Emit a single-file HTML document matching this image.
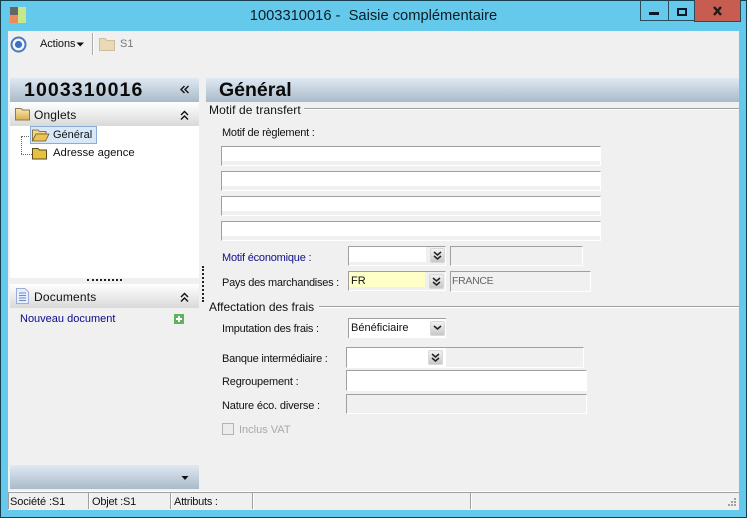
<!DOCTYPE html>
<html><head><meta charset="utf-8"><style>
html,body{margin:0;padding:0;background:#f0f0f0}
#w{position:relative;width:747px;height:518px;overflow:hidden;background:#65c9ec;font:11px "Liberation Sans",sans-serif;color:#111}
#w div,#w span.a{position:absolute;white-space:nowrap}
.t{line-height:14px;height:14px}
.f{box-sizing:border-box;border-top:1px solid #a0a0a0;border-left:1px solid #a0a0a0;border-right:1px solid #fff;border-bottom:1px solid #fff;background:#f0f0f0}
.btn{width:15px;height:15px;box-sizing:border-box;background:linear-gradient(#f2f2f2,#c8c8c8);border:1px solid #d8d8d8;border-radius:2px}
.hd{background:linear-gradient(#dfe9f2,#a9bac9)}
.sec{background:linear-gradient(#ffffff,#d9d9d9)}
.line{height:1px;background:#a0a0a0;border-bottom:1px solid #fff}
</style></head><body><div id="w">
<div style="left:0;top:0;width:747px;height:1px;background:#17404f"></div>
<div style="left:0;top:517px;width:747px;height:1px;background:#17404f"></div>
<div style="left:0;top:0;width:1px;height:518px;background:#17404f"></div>
<div style="left:746px;top:0;width:1px;height:518px;background:#17404f"></div>
<!-- app icon -->
<div style="left:10px;top:7px;width:8px;height:8px;background:#666"></div>
<div style="left:10px;top:15px;width:8px;height:8px;background:#f08a5a"></div>
<div style="left:18px;top:7px;width:8px;height:16px;background:#c4e88a"></div>
<div class="t" style="left:0;top:8px;width:747px;text-align:center;font-size:14.7px;line-height:16px;height:16px;color:#0c1c24">1003310016 -&nbsp; Saisie complémentaire</div>
<!-- window buttons -->
<div style="left:640px;top:0;width:29px;height:21px;box-sizing:border-box;border:1px solid #2a4c5c;border-top:0;border-right:0"></div>
<div style="left:668px;top:0;width:27px;height:21px;box-sizing:border-box;border:1px solid #2a4c5c;border-top:0;border-right:0"></div>
<div style="left:694px;top:0;width:47px;height:22px;box-sizing:border-box;background:#c75c50;border:1px solid #2a4c5c;border-top:0"></div>
<div style="left:649px;top:12px;width:10px;height:3px;background:#08182a"></div>
<div style="left:677px;top:8px;width:10px;height:8px;box-sizing:border-box;border:2px solid #08182a;border-top-width:2px"></div>
<svg style="position:absolute;left:712px;top:6px" width="12" height="10"><path d="M2 1L9 9M9 1L2 9" stroke="#1c1c1c" stroke-width="2.4" fill="none"/></svg>
<!-- client -->
<div style="left:8px;top:31px;width:731px;height:479px;background:#f0f0f0"></div>
<!-- toolbar -->
<svg style="position:absolute;left:10px;top:36px" width="18" height="18"><circle cx="8.5" cy="8.5" r="7" fill="#f4f6fc" stroke="#4a78c4" stroke-width="2"/><circle cx="8.5" cy="8.5" r="3.6" fill="#3f70c0"/></svg>
<div class="t" style="left:40px;top:37px;font-size:11px;letter-spacing:-.1px">Actions</div>
<svg style="position:absolute;left:76px;top:41px" width="9" height="6"><path d="M0.5 1.5H8L4.2 5.5Z" fill="#111"/></svg>
<div style="left:92px;top:33px;width:1px;height:22px;background:#aaa;border-right:1px solid #fff"></div>
<svg style="position:absolute;left:99px;top:36px" width="17" height="16"><path d="M0.5 2.5H6L8 4.5H15.5V14.5H0.5Z" fill="#ead9b4" stroke="#cdbd9c"/></svg>
<div class="t" style="left:120px;top:37px;color:#777;font-size:11px">S1</div>
<!-- left panel -->
<div class="hd" style="left:10px;top:78px;width:189px;height:24px"></div>
<div style="left:24px;top:79px;height:22px;line-height:23px;font-size:19.5px;font-weight:bold;color:#0a0a0a;letter-spacing:1.1px">1003310016</div>
<svg style="position:absolute;left:180px;top:85px" width="10" height="10"><path d="M4.5 1L1 4.5L4.5 8M8.5 1L5 4.5L8.5 8" stroke="#111" stroke-width="1.4" fill="none"/></svg>
<div class="sec" style="left:10px;top:102px;width:189px;height:24px"></div>
<svg style="position:absolute;left:15px;top:107px" width="16" height="14"><defs><linearGradient id="g1" x1="0" y1="0" x2="0" y2="1"><stop offset="0" stop-color="#f6e8b8"/><stop offset="1" stop-color="#d9ae4a"/></linearGradient></defs><path d="M0.5 1.5H6L7.5 3H14.5V13H0.5Z" fill="url(#g1)" stroke="#8a7a50"/></svg>
<div class="t" style="left:34px;top:108px;font-size:12px;letter-spacing:.15px">Onglets</div>
<svg style="position:absolute;left:180px;top:110px" width="10" height="11"><path d="M1 5L4.5 1.5L8 5M1 9.5L4.5 6L8 9.5" stroke="#111" stroke-width="1.4" fill="none"/></svg>
<div style="left:10px;top:126px;width:189px;height:152px;background:#fff"></div>
<div style="left:21px;top:136px;width:10px;height:0;border-top:1px dotted #666"></div>
<div style="left:21px;top:136px;width:0;height:18px;border-left:1px dotted #666"></div>
<div style="left:21px;top:154px;width:11px;height:0;border-top:1px dotted #666"></div>
<div style="left:30px;top:126px;width:67px;height:18px;box-sizing:border-box;background:#d7e8f8;border:1px solid #88aed4"></div>
<svg style="position:absolute;left:32px;top:128px" width="18" height="14"><path d="M0.5 2H6L7.5 3.5H14V6H4L0.5 13Z" fill="#f2d98a" stroke="#6b5a30" stroke-width=".8"/><path d="M4 6H17L13.5 13H0.5Z" fill="#eec254" stroke="#6b5a30" stroke-width=".8"/></svg>
<div class="t" style="left:53px;top:128px;font-size:11px">Général</div>
<svg style="position:absolute;left:32px;top:147px" width="16" height="13"><path d="M0.5 1.5H6L7.5 3H14.5V12H0.5Z" fill="#e8c040" stroke="#5a4a20"/></svg>
<div class="t" style="left:53px;top:146px;font-size:11.3px">Adresse agence</div>
<div style="left:87px;top:279px;width:35px;height:0;border-top:2px dotted #222"></div>
<div class="sec" style="left:10px;top:284px;width:189px;height:24px"></div>
<svg style="position:absolute;left:16px;top:288px" width="13" height="16"><path d="M0.5 0.5H9L12.5 4V15.5H0.5Z" fill="#e8eefa" stroke="#9fb0d8"/><path d="M3 5H10M3 7.5H10M3 10H10M3 12.5H10" stroke="#6c8ad0"/></svg>
<div class="t" style="left:34px;top:290px;font-size:12px;letter-spacing:.2px">Documents</div>
<svg style="position:absolute;left:180px;top:292px" width="10" height="11"><path d="M1 5L4.5 1.5L8 5M1 9.5L4.5 6L8 9.5" stroke="#111" stroke-width="1.4" fill="none"/></svg>
<div class="t" style="left:20px;top:312px;color:#0a0a8c;font-size:11px">Nouveau document</div>
<div style="left:174px;top:314px;width:10px;height:10px;background:#5fb35f"></div>
<div style="left:178px;top:316px;width:2px;height:6px;background:#fff"></div>
<div style="left:176px;top:318px;width:6px;height:2px;background:#fff"></div>
<div class="hd" style="left:10px;top:465px;width:189px;height:24px"></div>
<svg style="position:absolute;left:181px;top:475px" width="9" height="6"><path d="M0.5 1H7.5L4 5Z" fill="#111"/></svg>
<div style="left:202px;top:266px;width:0;height:36px;border-left:2px dotted #222"></div>
<!-- right panel -->
<div class="hd" style="left:206px;top:78px;width:533px;height:24px"></div>
<div style="left:219px;top:79px;height:22px;line-height:23px;font-size:19.5px;font-weight:bold;color:#0a0a0a">Général</div>
<div class="t" style="left:209px;top:103px;font-size:12px;letter-spacing:.1px">Motif de transfert</div>
<div class="line" style="left:304px;top:108px;width:435px"></div>
<div class="t" style="left:222px;top:126px;letter-spacing:-.23px">Motif de règlement :</div>
<div class="f" style="left:221px;top:146px;width:380px;height:20px;background:linear-gradient(#fff 14px,#f0f0f0 14px)"></div>
<div class="f" style="left:221px;top:171px;width:380px;height:20px;background:linear-gradient(#fff 14px,#f0f0f0 14px)"></div>
<div class="f" style="left:221px;top:196px;width:380px;height:20px;background:linear-gradient(#fff 14px,#f0f0f0 14px)"></div>
<div class="f" style="left:221px;top:221px;width:380px;height:20px;background:linear-gradient(#fff 14px,#f0f0f0 14px)"></div>
<div class="t" style="left:222px;top:251px;color:#10108c;letter-spacing:-.2px">Motif économique :</div>
<div class="f" style="left:348px;top:246px;width:98px;height:20px"></div>
<div style="left:349px;top:247px;width:77px;height:15px;background:#fff"></div>
<div class="btn" style="left:430px;top:248px"></div><svg style="position:absolute;left:433px;top:251px" width="9" height="10"><path d="M1 1L4.5 4L8 1M1 5L4.5 8L8 5" stroke="#222" stroke-width="1.5" fill="none"/></svg>
<div class="f" style="left:450px;top:246px;width:133px;height:20px"></div>
<div class="t" style="left:222px;top:276px;letter-spacing:-.26px">Pays des marchandises :</div>
<div class="f" style="left:348px;top:271px;width:98px;height:20px"></div>
<div style="left:349px;top:272px;width:76px;height:15px;background:#ffffc8"></div>
<div class="t" style="left:351px;top:274px;font-size:11px">FR</div>
<div class="btn" style="left:429px;top:274px"></div><svg style="position:absolute;left:432px;top:277px" width="9" height="10"><path d="M1 1L4.5 4L8 1M1 5L4.5 8L8 5" stroke="#222" stroke-width="1.5" fill="none"/></svg>
<div class="f" style="left:450px;top:271px;width:141px;height:21px"></div>
<div class="t" style="left:452px;top:274px;font-size:10.5px;letter-spacing:-.3px;color:#666">FRANCE</div>
<div class="t" style="left:209px;top:300px;font-size:12px">Affectation des frais</div>
<div class="line" style="left:319px;top:306px;width:420px"></div>
<div style="left:348px;top:318px;width:98px;height:20px;background:#fff;box-sizing:border-box;border-top:1px solid #a0a0a0;border-left:1px solid #a0a0a0"></div>
<div class="t" style="left:351px;top:321px;font-size:11px">Bénéficiaire</div>
<div class="btn" style="left:430px;top:321px"></div><svg style="position:absolute;left:433px;top:325px" width="9" height="6"><path d="M1 1L4.5 4L8 1" stroke="#222" stroke-width="1.6" fill="none"/></svg>
<div class="t" style="left:222px;top:322px;letter-spacing:-.24px">Imputation des frais :</div>
<div class="t" style="left:222px;top:352px;letter-spacing:-.23px">Banque intermédiaire :</div>
<div class="f" style="left:346px;top:347px;width:238px;height:21px"></div>
<div style="left:347px;top:348px;width:99px;height:19px;background:#fff"></div>
<div class="btn" style="left:428px;top:350px"></div><svg style="position:absolute;left:431px;top:353px" width="9" height="10"><path d="M1 1L4.5 4L8 1M1 5L4.5 8L8 5" stroke="#222" stroke-width="1.5" fill="none"/></svg>
<div class="t" style="left:222px;top:375px;letter-spacing:-.17px">Regroupement :</div>
<div class="f" style="left:346px;top:370px;width:241px;height:21px;background:#fff"></div>
<div class="t" style="left:222px;top:399px;letter-spacing:-.17px">Nature éco. diverse :</div>
<div class="f" style="left:346px;top:394px;width:241px;height:20px"></div>
<div style="left:222px;top:423px;width:12px;height:12px;box-sizing:border-box;border:1px solid #b4b4b4;background:#ececec"></div>
<div class="t" style="left:239px;top:423px;color:#a8a8a8;font-size:11px">Inclus VAT</div>
<!-- status bar -->
<div style="left:8px;top:491px;width:731px;height:1px;background:#fff"></div>
<div style="left:8px;top:492px;width:731px;height:1px;background:#a0a0a0"></div>
<div style="left:88px;top:493px;width:1px;height:16px;background:#a0a0a0;border-right:1px solid #fff"></div>
<div style="left:170px;top:493px;width:1px;height:16px;background:#a0a0a0;border-right:1px solid #fff"></div>
<div style="left:252px;top:493px;width:1px;height:16px;background:#a0a0a0;border-right:1px solid #fff"></div>
<div style="left:470px;top:493px;width:1px;height:16px;background:#a0a0a0;border-right:1px solid #fff"></div>
<div style="left:8px;top:493px;width:1px;height:16px;background:#a0a0a0"></div>
<div class="t" style="left:10px;top:495px;font-size:11px;letter-spacing:-.1px">Société :S1</div>
<div class="t" style="left:92px;top:495px;font-size:11px;letter-spacing:-.2px">Objet :S1</div>
<div class="t" style="left:174px;top:495px;font-size:11px;letter-spacing:-.25px">Attributs :</div>
<svg style="position:absolute;left:724px;top:497px" width="14" height="12"><path d="M10 1h2v2h-2zM7 4h2v2h-2zM10 4h2v2h-2zM4 7h2v2h-2zM7 7h2v2h-2zM10 7h2v2h-2z" fill="#a0a0a0"/></svg>
</div></body></html>
